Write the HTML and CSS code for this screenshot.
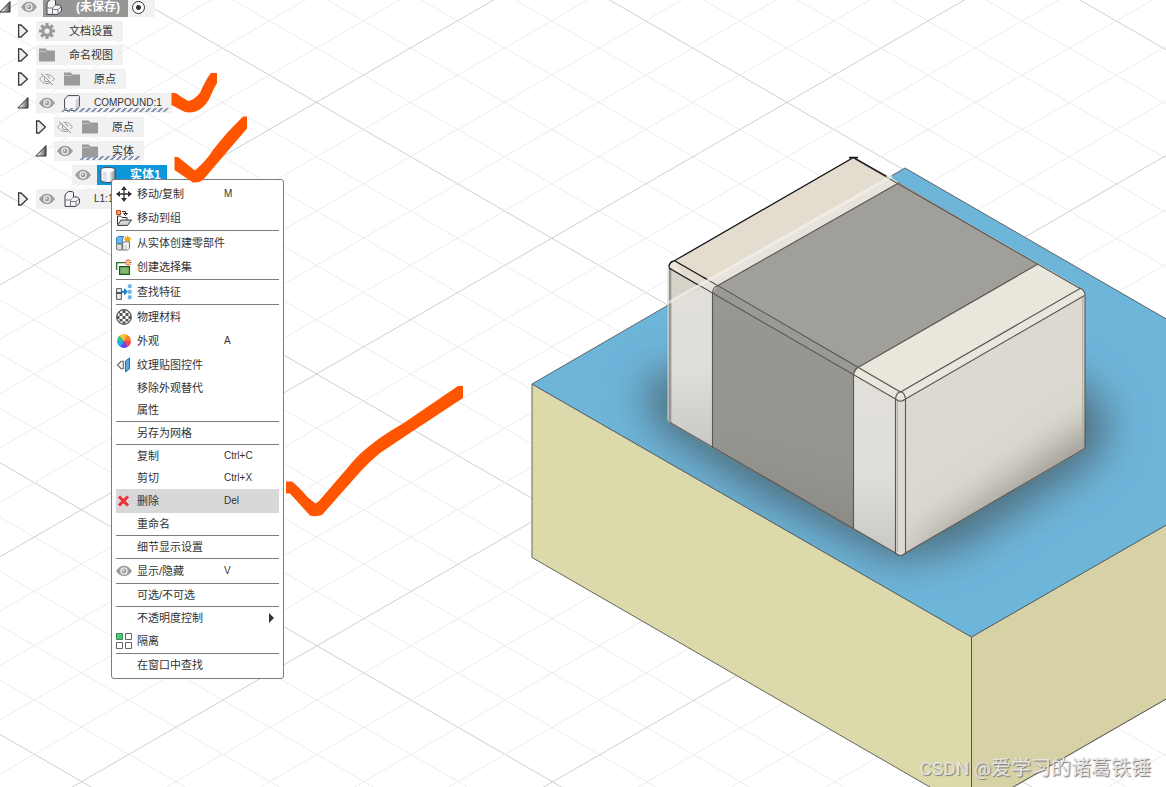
FILE: index.html
```html
<!DOCTYPE html>
<html lang="zh-CN">
<head>
<meta charset="utf-8">
<meta name="viewport" content="width=device-width, initial-scale=1">
<title>未保存</title>
<link rel="stylesheet" href="styles.css">
</head>
<body>
<svg class="symbols" aria-hidden="true">
  <symbol id="i-eye" viewBox="0 0 16 16"><path d="M0 8Q3.500 2.800 8 2.800T16 8Q12.500 13.200 8 13.200T0 8Z" fill="#9c9c9c"/><circle cx="8" cy="8" r="3.700" fill="#f0f0f0"/><circle cx="8" cy="8" r="2.400" fill="#9c9c9c"/><circle cx="7.400" cy="7.400" r=".9" fill="#fff"/></symbol>
  <symbol id="i-hidden" viewBox="0 0 16 16"><path d="M.6 8Q4 3.300 8 3.300T15.400 8Q12 12.700 8 12.700T.6 8Z" fill="#f8f8f8" stroke="#999"/><circle cx="8" cy="8" r="2.800" fill="none" stroke="#999"/><path d="M3 2L14.500 13" stroke="#f6f6f6" stroke-width="2"/><path d="M2 2.500L14 14" stroke="#8a8a8a"/></symbol>
  <symbol id="i-folder" viewBox="0 0 16 16"><path d="M0 1.500H7L8 3.500H16V14.500H0Z" fill="#9a9a9a"/><path d="M0 4.500H7L8 5.500" stroke="#c4c4c4" fill="none"/></symbol>
  <symbol id="i-gear" viewBox="0 0 16 16"><g stroke="#9a9a9a" stroke-width="3.200"><path d="M8 0V16M0 8H16M2.300 2.300L13.700 13.700M13.700 2.300L2.300 13.700"/></g><circle cx="8" cy="8" r="5.600" fill="#9a9a9a"/><circle cx="8" cy="8" r="2.600" fill="#f1f1f1"/></symbol>
  <symbol id="i-box" viewBox="0 0 16 16"><path d="M.6 5Q.6 4 1.500 3L4 .6H14Q15.400 .6 15.400 2V11L11.500 15.400H2Q.6 15.400 .6 14Z" fill="#f5f6f8" stroke="#45484e"/><path d="M11.500 15V5L15 1.500V11Z" fill="#cfd2d8"/><path d="M1.500 4.500H10.800V14.800M11.300 4.500L14.500 1.300" fill="none" stroke="#fff"/></symbol>
  <symbol id="i-parts" viewBox="0 0 16 16"><path d="M1 4L4 .6H8.500L9.500 2V6H13.500L15.400 8V12L12 15.400H1Z" fill="#f7f7f9" stroke="#3e4146" stroke-linejoin="round"/><path d="M1 9H6.500V15M6.500 9L9.500 6M6.500 10.500H12M12 10.500V15M12 10.500L15 8" fill="none" stroke="#777b83"/></symbol>
  <symbol id="i-body" viewBox="0 0 16 16"><linearGradient id="gb"><stop offset="0" stop-color="#fff"/><stop offset=".25" stop-color="#d5dce4"/><stop offset=".55" stop-color="#fff"/><stop offset="1" stop-color="#7b858f"/></linearGradient><path d="M.8 3Q1.500 .6 5 .6H11Q15 .6 15.300 3V13Q14.500 15.500 8 15.500T.8 13Z" fill="url(#gb)" stroke="#44484d"/><ellipse cx="8" cy="3" rx="6.500" ry="2" fill="#fff"/></symbol>
  <symbol id="i-closed" viewBox="0 0 12 16"><path d="M1.600 2H4L10.400 8L4 14H1.600Z" fill="#eee" stroke="#383838" stroke-width="1.300"/></symbol>
  <symbol id="i-open" viewBox="0 0 12 16"><linearGradient id="go" x2="1"><stop offset=".2" stop-color="#f2f2f2"/><stop offset="1" stop-color="#555"/></linearGradient><path d="M11 2.500V13H.8Z" fill="url(#go)" stroke="#333"/></symbol>
</svg>

<div class="workspace">
<svg class="scene" viewBox="0 0 1166 787" preserveAspectRatio="xMinYMin slice" aria-hidden="true">
  <defs>
    <path id="down" d="M0 0L1200 692.900"/>
    <path id="up" d="M0 0L1200 -692.900"/>
    <g id="downs"><use href="#down" class="major"/><g class="minor"><use href="#down" y="54.320"/><use href="#down" y="108.640"/><use href="#down" y="162.960"/><use href="#down" y="217.280"/></g></g>
    <g id="ups"><use href="#up" class="major"/><g class="minor"><use href="#up" y="54.320"/><use href="#up" y="108.640"/><use href="#up" y="162.960"/><use href="#up" y="217.280"/></g></g>
    <clipPath id="top"><path d="M532 384L905 168L1166 319V525L971.500 637Z"/></clipPath>
    <clipPath id="rface"><path d="M905.500 399L1085 295V449L905.500 553Z"/></clipPath>
    <filter id="blur" x="-20%" y="-20%" width="140%" height="140%"><feGaussianBlur stdDeviation="21"/></filter>
    <filter id="soft" x="-20%" y="-50%" width="140%" height="200%"><feGaussianBlur stdDeviation="20"/></filter>
    <linearGradient id="left" x2="0" y2="1"><stop offset="0" stop-color="#e2dfd9"/><stop offset=".55" stop-color="#dfded9"/><stop offset="1" stop-color="#cac8c4"/></linearGradient>
    <linearGradient id="gray" x1=".4" x2=".25" y2="1"><stop offset="0" stop-color="#989892"/><stop offset=".65" stop-color="#959590"/><stop offset="1" stop-color="#898681"/></linearGradient>
  </defs>
  <use href="#downs" y="-623.600"/><use href="#downs" y="-352"/><use href="#downs" y="-80.400"/><use href="#downs" y="191.200"/><use href="#downs" y="462.800"/><use href="#downs" y="734.400"/>
  <use href="#ups" y="-258.200"/><use href="#ups" y="13.400"/><use href="#ups" y="285"/><use href="#ups" y="556.800"/><use href="#ups" y="828.800"/><use href="#ups" y="1101"/><use href="#ups" y="1372.600"/>

  <path d="M532 384L971.500 637V811L532 557.500Z" fill="#dcdaab" stroke="#66655a"/>
  <path d="M971.500 637L1167 524.500V698.500L971.500 811Z" fill="#d6d2a6" stroke="#55544a"/>
  <path d="M532 384L905 168L1168 320V524L971.500 637Z" fill="#6eb5da"/>
  <g clip-path="url(#top)"><path d="M644 378L652 424L750 490L895 562L960 548L1094 462L1112 420L1080 380L880 330Z" fill="#4f6f80" filter="url(#blur)"/></g>
  <path d="M1168 524L971.500 637L532 384L905 168L1168 320" fill="none" stroke="#5d6468"/>

  <path d="M668.500 267L675 260.500L853.500 157.500L1081 288L1085 294V449L905 553.500L900.500 556L896 553.500L668.500 422Z" fill="#eae6dc"/>
  <path d="M675 261L853.500 158L891 177L693 289Z" fill="#e3dccf"/>
  <path d="M693 289L890 177L899 182.500L717 286L712 292Z" fill="#e8e4dd"/>
  <path d="M669 268L712.500 293V448L669 422Z" fill="url(#left)"/>
  <path d="M669 268L703 287L669 303Z" fill="#d5d3c8"/>
  <path d="M717 286L899.500 182.500L1038 264L858 367.500Z" fill="#a19f99"/>
  <path d="M712.500 293L717 286L858 367.500L853.500 375Z" fill="#9a9994"/>
  <path d="M712.500 293L853.500 375V529L712.500 448Z" fill="url(#gray)"/>
  <path d="M853.500 375L895.500 399V553L853.500 529Z" fill="url(#left)"/>
  <path d="M905.500 399L1085 295V449L905.500 553Z" fill="#dcd9d1"/>
  <g clip-path="url(#rface)"><path d="M920 580L1130 460V410L1080 436L920 548Z" fill="#8f8d86" filter="url(#soft)"/></g>
  <path d="M895.500 399H905.500V554H895.500Z" fill="#dedbd5"/>

  <g fill="none" stroke="#575652" stroke-width="1.100">
    <path d="M703 277L900.500 392L1080 288.500L853.500 158M697 284L895.500 399M905.500 399L1084.500 295.500"/>
    <path d="M717 286L899.500 182.500M858 367.500L1038 264M712.500 448V293Q713 287 717 286M853.500 529V375Q854 369 858 367.500"/>
    <path d="M895.500 554V399Q896 393 900.500 391.500Q905 393 905.500 399V554M895.500 399Q900.500 403.500 905.500 399M895.500 553Q900.500 558 905.500 553L1085 448.500V294Q1084 289 1079 288M895.500 553L670 422.500V268"/>
  </g>
  <path d="M671 268V422M897.300 402V552M1082.800 297V448" stroke="#aaa7a0" fill="none"/>
  <path d="M668 268V420" stroke="#d0cec6"/>
  <path d="M669 267.500Q669 262 674 261L853.500 157.500L886 176M675 261L708 280M669 268L700 286M849 157.500H858" stroke="#151515" stroke-width="1.300" fill="none"/>
  <path d="M669 302.500L892 176" stroke="#f4f2ec" stroke-width="3" opacity=".7"/>
</svg>

<nav class="browser" aria-label="浏览器">
  <ul class="tree">
    <li class="row"><svg class="twist"><use href="#i-open"/></svg><div class="item"><svg class="icon"><use href="#i-eye"/></svg><span class="root"><svg class="icon"><use href="#i-parts"/></svg><b>(未保存)</b></span><label class="active"><input type="radio" name="active" checked aria-label="激活"></label></div></li>
    <li class="row l1"><svg class="twist"><use href="#i-closed"/></svg><div class="item"><svg class="icon"><use href="#i-gear"/></svg><span class="name">文档设置</span></div></li>
    <li class="row l1"><svg class="twist"><use href="#i-closed"/></svg><div class="item"><svg class="icon"><use href="#i-folder"/></svg><span class="name">命名视图</span></div></li>
    <li class="row l1"><svg class="twist"><use href="#i-closed"/></svg><div class="item"><svg class="icon"><use href="#i-hidden"/></svg><svg class="icon"><use href="#i-folder"/></svg><span class="name">原点</span></div></li>
    <li class="row l1"><svg class="twist"><use href="#i-open"/></svg><div class="item hatched"><svg class="icon"><use href="#i-eye"/></svg><svg class="icon"><use href="#i-box"/></svg><span class="name latin">COMPOUND:1</span></div></li>
    <li class="row l2"><svg class="twist"><use href="#i-closed"/></svg><div class="item"><svg class="icon"><use href="#i-hidden"/></svg><svg class="icon"><use href="#i-folder"/></svg><span class="name">原点</span></div></li>
    <li class="row l2"><svg class="twist"><use href="#i-open"/></svg><div class="item hatched"><svg class="icon"><use href="#i-eye"/></svg><svg class="icon"><use href="#i-folder"/></svg><span class="name">实体</span></div></li>
    <li class="row l3"><span class="twist"></span><div class="item picked"><svg class="icon"><use href="#i-eye"/></svg><span class="root"><svg class="icon"><use href="#i-body"/></svg><b>实体1</b></span></div></li>
    <li class="row l1"><svg class="twist"><use href="#i-closed"/></svg><div class="item"><svg class="icon"><use href="#i-eye"/></svg><svg class="icon"><use href="#i-parts"/></svg><span class="name latin">L1:1</span></div></li>
  </ul>
</nav>

<div class="menu" role="menu">
  <button class="cmd tall" role="menuitem"><svg class="icon" viewBox="0 0 16 16"><path d="M8 2V14M2 8H14" stroke="#333" stroke-width="1.300"/><path d="M8 0L11 4H5ZM8 16L5 12H11ZM0 8L4 5V11ZM16 8L12 11V5Z" fill="#333"/></svg><span>移动/复制</span><kbd>M</kbd></button>
  <button class="cmd tall" role="menuitem"><svg class="icon" viewBox="0 0 16 16"><path d="M.6 .6H4.500V4.500H.6Z" fill="#f5a078" stroke="#b6440d"/><path d="M6 1.500H9.500V4M7.500 3.500H11.500L9.500 5.500Z" fill="none" stroke="#333"/><path d="M1.500 14.500V6H4.500L6 7.500H11V10" fill="#fff" stroke="#333"/><path d="M1.500 15.400L5 10H15.500L11.500 15.400Z" fill="#d3d5da" stroke="#333"/></svg><span>移动到组</span></button>
  <hr>
  <button class="cmd tall" role="menuitem"><svg class="icon" viewBox="0 0 16 16"><path d="M.5 3L2 1.500H8L6.500 3V8.500H.5Z" fill="#6bb5ed" stroke="#3685c4"/><path d="M.5 9H6V15H1.500L.5 14ZM6.500 8L9 6.500H13.500V13L12 15H6.500Z" fill="#dcdde0" stroke="#777"/><path d="M7 9H12V15" fill="none" stroke="#fff"/><path d="M11.500 0L12.400 2.200L14.500 1.200L13.700 3.200L16 4L13.700 4.900L14.500 7L12.400 6L11.500 8L10.600 6L8.500 7L9.300 4.900L7 4L9.300 3.200L8.500 1.200L10.600 2.200Z" fill="#f8a51b"/></svg><span>从实体创建零部件</span></button>
  <button class="cmd tall" role="menuitem"><svg class="icon" viewBox="0 0 16 16"><path d="M.7 11V3.700H10" fill="none" stroke="#26722b" stroke-width="1.300"/><path d="M3.600 7.600H13.400V15.400H3.600Z" fill="#86b66d" stroke="#155c1b" stroke-width="1.200"/><path d="M12 0V7M8.500 3.500H15.500M9.500 1L14.500 6M14.500 1L9.500 6" stroke="#d33b18"/><circle cx="12" cy="3.500" r="1.500" fill="#ffd774"/></svg><span>创建选择集</span></button>
  <hr>
  <button class="cmd tall" role="menuitem"><svg class="icon" viewBox="0 0 16 16"><path d="M.6 4.600H5.400V9H.6ZM.6 9H5.400V15.400H.6Z" fill="#eee" stroke="#555"/><path d="M.6 9H5.400" stroke="#333"/><path d="M6 6.700H8V4L12 7.700L8 11.400V8.700H6Z" fill="#1682dc"/><path d="M12 .5H15.500V4H12ZM12 6H15.500V9.500H12ZM12 11.500H15.500V15H12Z" fill="#63aee7" stroke="#9ed1f4" stroke-width=".5"/></svg><span>查找特征</span></button>
  <hr>
  <button class="cmd tall" role="menuitem"><svg class="icon" viewBox="0 0 16 16"><clipPath id="ball"><circle cx="8" cy="8" r="7"/></clipPath><circle cx="8" cy="8" r="7.300" fill="#fff" stroke="#555" stroke-width="1.300"/><path clip-path="url(#ball)" d="M6.500 0H9.500V4H6.500ZM6.500 7H9.500V10H6.500ZM6.500 12.500H9.500V16H6.500ZM3.500 4H6.500V7H3.500ZM9.500 4H12.500V7H9.500ZM3.500 10H6.500V12.500H3.500ZM9.500 10H12.500V12.500H9.500ZM0 7H3.500V10H0ZM12.500 7H16V10H12.500ZM1 1H4V4H1ZM12.500 1H15V4H12.500ZM1 12.500H3.500V15H1ZM12.500 12.500H15V15H12.500Z" fill="#555"/></svg><span>物理材料</span></button>
  <button class="cmd tall" role="menuitem"><i class="wheel"></i><span>外观</span><kbd>A</kbd></button>
  <button class="cmd tall" role="menuitem"><svg class="icon" viewBox="0 0 16 16"><path d="M1.500 8L5 4.500H7.500V11.500H5Z" fill="#eee" stroke="#777" stroke-width="1.300"/><path d="M6 5L4 8L6 11" fill="none" stroke="#fff"/><path d="M9.500 4L13.500 1V12L9.500 15Z" fill="#58a9df" stroke="#286fa3"/></svg><span>纹理贴图控件</span></button>
  <button class="cmd" role="menuitem"><span>移除外观替代</span></button>
  <button class="cmd" role="menuitem"><span>属性</span></button>
  <hr>
  <button class="cmd" role="menuitem"><span>另存为网格</span></button>
  <hr>
  <button class="cmd" role="menuitem"><span>复制</span><kbd>Ctrl+C</kbd></button>
  <button class="cmd" role="menuitem"><span>剪切</span><kbd>Ctrl+X</kbd></button>
  <button class="cmd tall hot" role="menuitem"><svg class="icon" viewBox="0 0 16 16"><path d="M3 3.500L12 12.500M12 3.500L3 12.500" stroke="#ee3035" stroke-width="3"/></svg><span>删除</span><kbd>Del</kbd></button>
  <button class="cmd" role="menuitem"><span>重命名</span></button>
  <hr>
  <button class="cmd" role="menuitem"><span>细节显示设置</span></button>
  <hr>
  <button class="cmd tall" role="menuitem"><svg class="icon"><use href="#i-eye"/></svg><span>显示/隐藏</span><kbd>V</kbd></button>
  <hr>
  <button class="cmd" role="menuitem"><span>可选/不可选</span></button>
  <hr>
  <button class="cmd" role="menuitem" aria-haspopup="true"><span>不透明度控制</span><svg class="more" viewBox="0 0 5 10"><path d="M0 0L5 5L0 10Z" fill="#333"/></svg></button>
  <button class="cmd tall" role="menuitem"><svg class="icon" viewBox="0 0 16 16"><path d="M.5 .5H6.500V6.500H.5Z" fill="#51c878" stroke="#3d8d58"/><path d="M9.500 .5H15.500V6.500H9.500ZM.5 9.500H6.500V15.500H.5ZM9.500 9.500H15.500V15.500H9.500Z" fill="#fff" stroke="#666"/></svg><span>隔离</span></button>
  <hr>
  <button class="cmd" role="menuitem"><span>在窗口中查找</span></button>
</div>

<svg class="scene marks" viewBox="0 0 1166 787" preserveAspectRatio="xMinYMin slice" aria-hidden="true">
  <g fill="#f50">
    <path d="M171.500 93Q176 92 180 96L188 101Q194 100 200 93Q206 79 211 73H217V83Q214 88 211 95Q207 105 199 110Q189 115 181 110L171.500 105Z"/>
    <path d="M174.500 157H178L195 170.500Q207 160 213 150Q220 141 227 133L243 116.500H247V128.500L226 153L203 180Q199 183 193 182.500L174.500 170Z"/>
    <path d="M286 481.500H292Q297 485 308 497.500L315.500 503.500L319 501L350 465Q359 454 367 448Q381 436 403 423.500L458 386H463V398L413 431L380 453Q369 462 360 472L322 515Q316 517 310 515.500L290 493.500H286Z"/>
  </g>
</svg>
<p class="watermark"><span>CSDN @</span>爱学习的诸葛铁锤</p>
</div>
</body>
</html>
```
FILE: styles.css
```css
* { box-sizing: border-box; }

body {
  margin: 0;
  background: #fff;
  color: #333;
  font: 11px/20px "Liberation Sans", "Noto Sans CJK SC", sans-serif;
}

.symbols { position: absolute; width: 0; height: 0; }

.workspace {
  display: grid;
  position: relative;
  height: 100vh;
  overflow: hidden;
}

.workspace > * { grid-area: 1 / 1; }

.scene { width: 100%; height: 100%; min-height: 0; }
.marks { pointer-events: none; z-index: 3; }

.major { stroke: #cfcfcf; }
.minor { stroke: #ececec; }

.browser { align-self: start; justify-self: start; z-index: 1; margin-top: -3px; }

.tree {
  display: grid;
  gap: 4px;
  margin: 0;
  padding: 0;
  list-style: none;
}

.row { display: flex; height: 20px; }
.l1 { padding-left: 18px; }
.l2 { padding-left: 36px; }
.l3 { padding-left: 54px; }

.twist { width: 12px; height: 16px; margin: 2px 7px 2px -1px; flex: none; }

.item {
  display: flex;
  align-items: center;
  gap: 9px;
  padding: 0 10px 0 3px;
  background: #f1f1f1;
  position: relative;
}

.icon { width: 16px; height: 16px; flex: none; }
.name { margin-left: 5px; }
.latin { font-size: 10px; }

.root {
  display: flex;
  align-items: center;
  gap: 14px;
  height: 20px;
  margin-left: -3px;
  padding: 0 8px 0 3px;
  background: #969696;
  color: #fff;
  font-size: 12px;
}

.picked { padding-right: 0; }
.picked .root { background: #0d96d9; padding-right: 6px; }

.active { display: flex; margin-left: -5px; }
.active input {
  appearance: none;
  width: 13px;
  height: 13px;
  margin: 0;
  border: 1px solid #333;
  border-radius: 50%;
  background: radial-gradient(circle, #333 0 2px, #fff 3px);
}

.hatched::after {
  content: "";
  position: absolute;
  left: 27px;
  right: 5px;
  bottom: 1px;
  height: 4px;
  background: repeating-linear-gradient(90deg, #8c9ab6 0 3px, transparent 3px 6px);
  transform: skewX(-45deg);
}

.menu {
  position: absolute;
  left: 111px;
  top: 179px;
  z-index: 2;
  width: 173px;
  padding: 2px 4px;
  border: 1px solid #7c7c7c;
  border-radius: 3px;
  background: #fff;
}

.menu hr { height: 1px; margin: 0; border: 0; background: #7c7c7c; }

.cmd {
  display: grid;
  grid-template-columns: 16px 82px 1fr;
  gap: 5px;
  align-items: center;
  width: 100%;
  height: 22px;
  padding: 0;
  border: 0;
  background: none;
  color: inherit;
  font: inherit;
  text-align: left;
  white-space: nowrap;
}

.cmd span { grid-column: 2; grid-row: 1; }
.cmd kbd { grid-column: 3; font: 10px/20px "Liberation Sans", sans-serif; }
.cmd.tall { height: 24px; }
.cmd.hot { background: #d8d8d8; }

.wheel {
  width: 14px;
  height: 14px;
  margin-left: 1px;
  border-radius: 50%;
  background: conic-gradient(#ffb52e 0 30deg, #fb7b35 30deg 90deg, #f04452 90deg 150deg, #7340f0 150deg 210deg, #26a9e8 210deg 270deg, #35c48a 270deg 320deg, #ffc83a 320deg);
}

.more { width: 5px; height: 10px; grid-column: 3; justify-self: end; margin-right: 5px; }

.watermark {
  align-self: end;
  justify-self: end;
  z-index: 3;
  margin: 0 15px 3px 0;
  color: #e4e4e4;
  font-size: 20px;
  line-height: 30px;
  text-shadow: 1px 1px 1px #777;
}

.watermark span { font-family: Roboto, sans-serif; font-size: 19px; }
```
